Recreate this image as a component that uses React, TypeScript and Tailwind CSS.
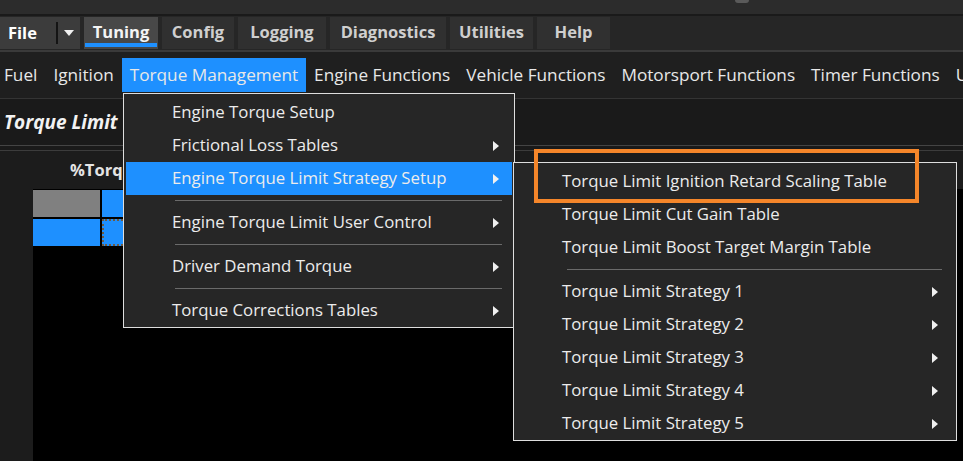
import React from "react";

const Arrow = () => (
  <svg width="6" height="10" viewBox="0 0 6 10" className="shrink-0">
    <polygon points="0,0 6,5 0,10" fill="#f0f0f0" />
  </svg>
);

type Item = { label: string; arrow?: boolean; active?: boolean; sep?: boolean };

const MenuRow = ({ item, arrowRight }: { item: Item; arrowRight: string }) => (
  <div
    className={`mx-[2px] h-[33px] flex items-center pl-[46px] ${arrowRight} ${
      item.active ? "bg-[#1e90ff]" : ""
    }`}
  >
    <span className="flex-1 text-[16.8px] text-[#ececec] whitespace-nowrap leading-none">{item.label}</span>
    {item.arrow && <Arrow />}
  </div>
);

const Sep = ({ cls }: { cls: string }) => (
  <div className={`h-[11px] flex items-center ${cls}`}>
    <div className="h-px w-full bg-[#6a6a6a]" />
  </div>
);

export default function App() {
  const tabs = [
    { label: "Tuning", w: "w-[74px]", active: true },
    { label: "Config", w: "w-[72px]" },
    { label: "Logging", w: "w-[88px]" },
    { label: "Diagnostics", w: "w-[116px]" },
    { label: "Utilities", w: "w-[83px]" },
    { label: "Help", w: "w-[73px]" },
  ];
  const menubar = [
    "Ignition",
    "Torque Management",
    "Engine Functions",
    "Vehicle Functions",
    "Motorsport Functions",
    "Timer Functions",
    "U",
  ];
  const strategies = [1, 2, 3, 4, 5];

  return (
    <div className="relative w-[963px] h-[461px] overflow-hidden bg-[#1c1c1c] font-['Open_Sans',sans-serif] select-none">
      {/* title bar */}
      <div className="relative h-[14px] bg-[#2c2c2c]">
        <div className="absolute left-[735px] top-0 w-[14px] h-[3px] rounded-b-full bg-[#5a5a5a]" />
      </div>
      <div className="h-[2px] bg-[#1a1a1a]" />
      {/* tab row */}
      <div className="h-[34px] bg-[#262626] pt-[1px] flex gap-[4px]">
        <div className="h-[32px] w-[80px] bg-[#3c3c3c] flex items-center">
          <span className="w-[56px] pl-[8px] text-[16.5px] font-bold text-white leading-none pt-[1px]">File</span>
          <div className="w-[2px] h-[22px] bg-[#141414]" />
          <div className="flex-1 flex justify-center">
            <svg width="10" height="6" viewBox="0 0 10 6">
              <polygon points="0,0 10,0 5,6" fill="#f0f0f0" />
            </svg>
          </div>
        </div>
        {tabs.map((t) => (
          <div
            key={t.label}
            className={`relative h-[32px] ${t.w} flex items-center justify-center ${
              t.active ? "bg-[#484848]" : "bg-[#303030]"
            }`}
          >
            <span
              className={`text-[16.5px] font-bold leading-none pb-[2px] ${
                t.active ? "text-[#f4f4f4]" : "text-[#cfcfcf]"
              }`}
            >
              {t.label}
            </span>
            {t.active && <div className="absolute left-[1px] right-[1px] bottom-[2px] h-[4px] bg-[#1e90ff]" />}
          </div>
        ))}
      </div>
      <div className="h-[2px] bg-[#3a3a3a]" />
      {/* menu bar */}
      <div className="h-[46px] bg-[#1f1f1f] flex items-center">
        <span className="pl-[4px] pr-[8px] text-[17.2px] text-[#e8e8e8] leading-none">Fuel</span>
        {menubar.map((m) => (
          <div
            key={m}
            className={`h-[34px] px-[8px] flex items-center whitespace-nowrap ${
              m === "Torque Management" ? "bg-[#1e90ff]" : ""
            }`}
          >
            <span className="text-[17.2px] text-[#e8e8e8] leading-none">{m}</span>
          </div>
        ))}
      </div>
      <div className="h-px bg-[#343434]" />
      {/* panel header */}
      <div className="h-[46px] bg-[#1a1a1a] flex items-center pl-[4px]">
        <span className="text-[19px] font-bold italic text-[#f2f2f2] leading-none">Torque Limit</span>
      </div>
      <div className="h-px bg-[#444444]" />
      <div className="h-[4px] bg-[#1a1a1a]" />
      <div className="h-px bg-[#3c3c3c]" />
      {/* body */}
      <div className="flex h-[310px]">
        <div className="w-[33px] bg-[#1c1c1c]" />
        <div className="flex-1 flex flex-col">
          <div className="h-[38px] bg-[#1c1c1c] flex items-center pl-[37px]">
            <span className="text-[16.5px] font-bold text-[#e4e4e4] leading-none">%Torque Limit</span>
          </div>
          <div className="flex-1 bg-black flex flex-col gap-[2px] pt-[1px]">
            <div className="flex gap-[2px] h-[27px]">
              <div className="w-[67px] bg-[#808080]" />
              <div className="w-[80px] bg-[#1e90ff]" />
            </div>
            <div className="flex gap-[2px] h-[27px]">
              <div className="w-[67px] bg-[#1e90ff]" />
              <div className="w-[80px] bg-[#1e90ff] border-2 border-dotted border-[#6b5a44]" />
            </div>
          </div>
        </div>
      </div>

      {/* main dropdown */}
      <div className="absolute left-[123px] top-[93px] w-[392px] bg-[#262626] border border-[#dedede] pt-[2px]">
        <MenuRow item={{ label: "Engine Torque Setup" }} arrowRight="pr-[13px]" />
        <MenuRow item={{ label: "Frictional Loss Tables", arrow: true }} arrowRight="pr-[13px]" />
        <MenuRow item={{ label: "Engine Torque Limit Strategy Setup", arrow: true, active: true }} arrowRight="pr-[13px]" />
        <Sep cls="pl-[51px] pr-[12px]" />
        <MenuRow item={{ label: "Engine Torque Limit User Control", arrow: true }} arrowRight="pr-[13px]" />
        <Sep cls="pl-[51px] pr-[12px]" />
        <MenuRow item={{ label: "Driver Demand Torque", arrow: true }} arrowRight="pr-[13px]" />
        <Sep cls="pl-[51px] pr-[12px]" />
        <MenuRow item={{ label: "Torque Corrections Tables", arrow: true }} arrowRight="pr-[13px]" />
      </div>

      {/* submenu */}
      <div className="absolute left-[513px] top-[162px] w-[444px] bg-[#262626] border border-[#dedede] pt-[2px]">
        <MenuRow item={{ label: "Torque Limit Ignition Retard Scaling Table" }} arrowRight="pr-[16px]" />
        <MenuRow item={{ label: "Torque Limit Cut Gain Table" }} arrowRight="pr-[16px]" />
        <MenuRow item={{ label: "Torque Limit Boost Target Margin Table" }} arrowRight="pr-[16px]" />
        <Sep cls="pl-[53px] pr-[14px]" />
        {strategies.map((n) => (
          <MenuRow key={n} item={{ label: `Torque Limit Strategy ${n}`, arrow: true }} arrowRight="pr-[16px]" />
        ))}
      </div>

      {/* orange highlight box */}
      <div className="absolute left-[534px] top-[149px] w-[385px] h-[54px] border-[4px] border-[#f5862a]" />
    </div>
  );
}
